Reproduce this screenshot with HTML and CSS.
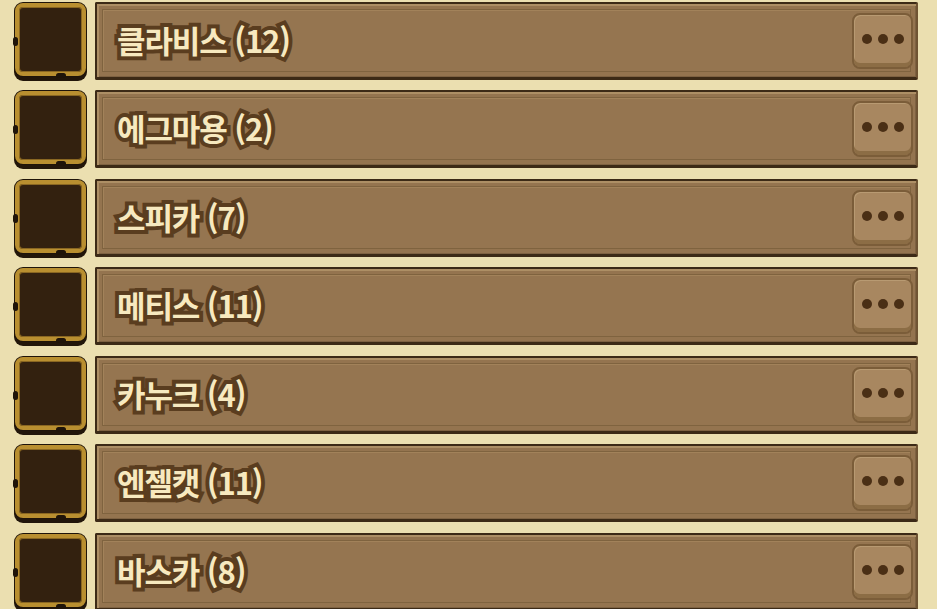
FILE: index.html
```html
<!DOCTYPE html>
<html lang="ko">
  <head>
    <meta charset="UTF-8" />
    <title>Collection</title>
    <link rel="stylesheet" href="styles.css">
  </head>
  <body>
    <ul class="list">
      <li class="row">
        <div class="slot"></div>
        <div class="panel">
          <span class="name">클라비스 (12)</span>
          <button class="more"><i></i><i></i><i></i></button>
        </div>
      </li>
      <li class="row">
        <div class="slot"></div>
        <div class="panel">
          <span class="name">에그마용 (2)</span>
          <button class="more"><i></i><i></i><i></i></button>
        </div>
      </li>
      <li class="row">
        <div class="slot"></div>
        <div class="panel">
          <span class="name">스피카 (7)</span>
          <button class="more"><i></i><i></i><i></i></button>
        </div>
      </li>
      <li class="row">
        <div class="slot"></div>
        <div class="panel">
          <span class="name">메티스 (11)</span>
          <button class="more"><i></i><i></i><i></i></button>
        </div>
      </li>
      <li class="row">
        <div class="slot"></div>
        <div class="panel">
          <span class="name">카누크 (4)</span>
          <button class="more"><i></i><i></i><i></i></button>
        </div>
      </li>
      <li class="row">
        <div class="slot"></div>
        <div class="panel">
          <span class="name">엔젤캣 (11)</span>
          <button class="more"><i></i><i></i><i></i></button>
        </div>
      </li>
      <li class="row">
        <div class="slot"></div>
        <div class="panel">
          <span class="name">바스카 (8)</span>
          <button class="more"><i></i><i></i><i></i></button>
        </div>
      </li>
    </ul>
  </body>
</html>
```

FILE: styles.css
```css
body {
  margin: 0;
  background-color: #ebdfb0;
  font-family: "Noto Sans CJK KR", "Noto Sans", sans-serif;
  overflow: hidden;
}
.list {
  list-style: none;
  margin: 0;
  padding: 2px 19px 0 15px;
  display: flex;
  flex-direction: column;
  gap: 10.45px;
}
.row {
  display: flex;
  gap: 9px;
  height: 78px;
}
.slot {
  position: relative;
  box-sizing: border-box;
  width: 71px;
  height: 73px;
  margin-top: 1px;
  background-color: #33210f;
  border: 4px solid #b98f30;
  border-radius: 8px;
  box-shadow: 0 0 0 1px #1f1409, inset 0 0 0 1px #8a6722, 0 4px 0 1px #22160a;
}
.slot::before,
.slot::after {
  content: "";
  position: absolute;
  background-color: #1f1409;
  border-radius: 3px;
}
.slot::before {
  left: -6px;
  top: 30px;
  width: 5px;
  height: 9px;
}
.slot::after {
  right: 16px;
  bottom: -6px;
  width: 10px;
  height: 5px;
}
.panel {
  flex: 1;
  box-sizing: border-box;
  height: 78px;
  display: flex;
  align-items: center;
  justify-content: space-between;
  padding: 0 3px 0 20px;
  background-color: #957550;
  border: 2px solid #3c2a16;
  border-bottom-width: 3px;
  border-right-color: #6f5433;
  border-radius: 2px;
  box-shadow: inset 2px 2px 0 #ad8f65, inset -1px -1px 0 #7e6242,
    inset 0 0 0 5px #94744f, inset 0 0 0 6px #7f633f,
    inset 1px 1px 0 6px #a2825a;
}
.name {
  font-size: 31px;
  font-weight: 700;
  letter-spacing: -1.1px;
  color: #f7e9bf;
  -webkit-text-stroke: 8px #5a3d1f;
  paint-order: stroke fill;
  line-height: 1;
  margin-top: -2px;
}
.more {
  box-sizing: border-box;
  width: 61px;
  height: 56px;
  margin-top: 1px;
  display: flex;
  align-items: center;
  justify-content: center;
  gap: 6px;
  padding: 0 0 4px;
  background-color: #a88760;
  border: 2px solid #7b5d39;
  border-radius: 8px;
  box-shadow: inset 0 -4px 0 #8c6d45, inset 1px 1px 0 #b89a72;
  cursor: pointer;
}
.more i {
  width: 10px;
  height: 10px;
  border-radius: 50%;
  background-color: #4a2f15;
}
```
